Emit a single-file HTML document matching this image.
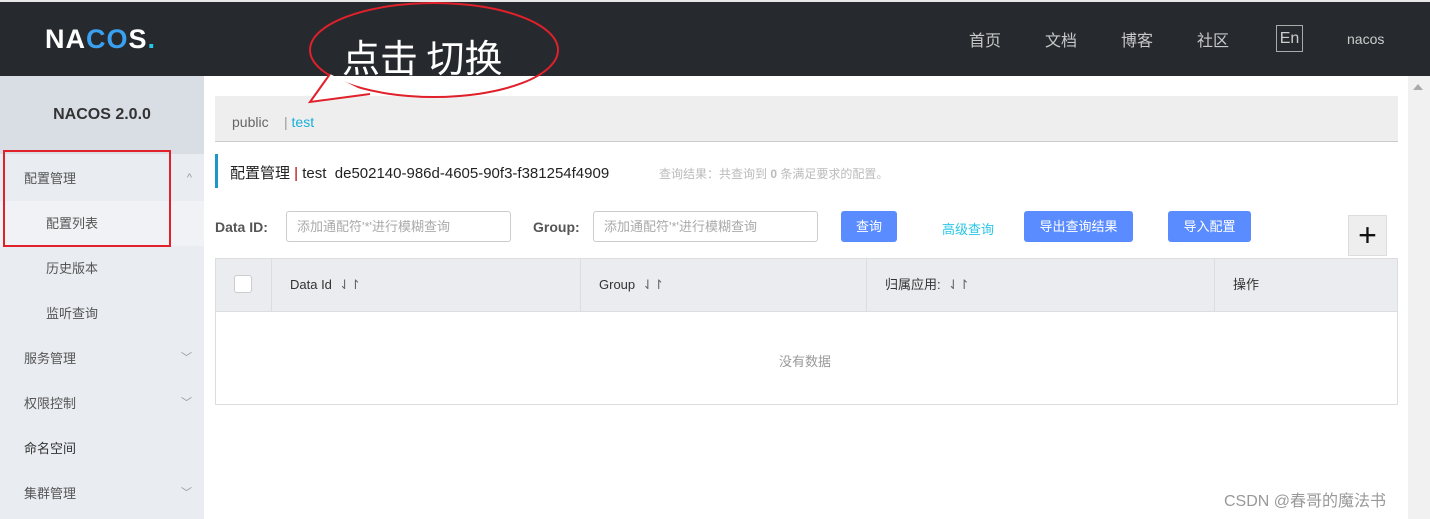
<!DOCTYPE html>
<html><head><meta charset="utf-8"><style>
*{margin:0;padding:0;box-sizing:border-box}
body{width:1430px;height:519px;overflow:hidden;background:#fff;font-family:"Liberation Sans","Noto Sans CJK SC",sans-serif;position:relative;font-size:13px;color:#333}
.a{position:absolute}
.hdr{left:0;top:0;width:1430px;height:76px;background:#262a2f;border-top:2px solid #e8e8e8}
.nav{top:27px;color:#c8c8c8;font-size:16px}
.side{left:0;top:76px;width:204px;height:443px;background:#e9ecf1}
.mi{left:0;width:204px;height:45px;line-height:45px;padding-left:24px;font-size:13px;color:#555}
.sub{padding-left:46px}
.chev{position:absolute;right:12px;top:0;color:#999;font-size:11px}
.btn{background:#5a8cff;color:#fff;border-radius:3px;height:31px;line-height:31px;text-align:center;font-size:13px;top:211px}
.inp{top:211px;height:31px;border:1px solid #ccc;border-radius:3px;color:#aaa;font-size:13px;line-height:29px;padding-left:10px;width:225px}
.th{top:258px;height:54px;line-height:54px;font-size:13px;color:#333;border-right:1px solid #ddd}
</style></head><body>
<div class="a hdr"></div>
<div class="a" style="left:45px;top:24px;color:#fff;font-size:27px;font-weight:bold;letter-spacing:1px;line-height:30px">NA<span style="color:#3aa0f0">CO</span>S<span style="color:#25c9e5">.</span></div>
<div class="a nav" style="left:969px">首页</div>
<div class="a nav" style="left:1045px">文档</div>
<div class="a nav" style="left:1121px">博客</div>
<div class="a nav" style="left:1197px">社区</div>
<div class="a" style="left:1276px;top:25px;width:27px;height:27px;border:1px solid #aaa;color:#ccc;font-size:16px;text-align:center;line-height:25px">En</div>
<div class="a" style="left:1347px;top:31px;color:#ccc;font-size:14px">nacos</div>

<div class="a side"></div>
<div class="a" style="left:0;top:76px;width:204px;height:78px;background:#d9dee5;text-align:center;line-height:78px;font-weight:bold;font-size:16px;color:#333">NACOS 2.0.0</div>
<div class="a mi" style="top:156px">配置管理<span class="chev">^</span></div>
<div class="a mi sub" style="top:201px;background:#f0f2f5">配置列表</div>
<div class="a mi sub" style="top:246px">历史版本</div>
<div class="a mi sub" style="top:291px">监听查询</div>
<div class="a mi" style="top:336px">服务管理<span class="chev">﹀</span></div>
<div class="a mi" style="top:381px">权限控制<span class="chev">﹀</span></div>
<div class="a mi" style="top:426px;color:#333">命名空间</div>
<div class="a mi" style="top:471px">集群管理<span class="chev">﹀</span></div>
<div class="a" style="left:3px;top:150px;width:168px;height:97px;border:2px solid #e0202a"></div>

<div class="a" style="left:1408px;top:76px;width:22px;height:443px;background:#f1f1f1"></div>
<div class="a" style="left:1413px;top:84px;width:0;height:0;border-left:5px solid transparent;border-right:5px solid transparent;border-bottom:6px solid #aaa"></div>

<div class="a" style="left:215px;top:96px;width:1183px;height:46px;background:#eee;border-bottom:1px solid #ccc"></div>
<div class="a" style="left:232px;top:114px;color:#666;font-size:14px">public</div>
<div class="a" style="left:284px;top:114px;color:#1ab0d8;font-size:14px"><span style="color:#999">|</span> test</div>

<div class="a" style="left:215px;top:154px;width:3px;height:34px;background:#1a98c8"></div>
<div class="a" style="left:230px;top:162px;font-size:15px;color:#222">配置管理 <span style="color:#a00">|</span> test&nbsp; de502140-986d-4605-90f3-f381254f4909</div>
<div class="a" style="left:659px;top:165px;font-size:12px;color:#bbb">查询结果：共查询到 <b>0</b> 条满足要求的配置。</div>

<div class="a" style="left:215px;top:219px;font-weight:bold;color:#555;font-size:14px">Data ID:</div>
<div class="a inp" style="left:286px">添加通配符'*'进行模糊查询</div>
<div class="a" style="left:533px;top:219px;font-weight:bold;color:#555;font-size:14px">Group:</div>
<div class="a inp" style="left:593px">添加通配符'*'进行模糊查询</div>
<div class="a btn" style="left:841px;width:56px">查询</div>
<div class="a" style="left:942px;top:219px;color:#2ac5e5">高级查询</div>
<div class="a btn" style="left:1024px;width:109px">导出查询结果</div>
<div class="a btn" style="left:1168px;width:83px">导入配置</div>
<div class="a" style="left:1348px;top:215px;width:39px;height:41px;background:#eee;border:1px solid #ddd;text-align:center;line-height:38px;font-size:32px;color:#111">+</div>

<div class="a" style="left:215px;top:258px;width:1183px;height:147px;border:1px solid #ddd"></div>
<div class="a" style="left:216px;top:259px;width:1181px;height:53px;background:#ebecf0;border-bottom:1px solid #ddd"></div>
<div class="a th" style="left:216px;width:56px"></div>
<div class="a" style="left:234px;top:275px;width:18px;height:18px;border:1px solid #ccc;border-radius:3px;background:#fff"></div>
<div class="a th" style="left:272px;width:309px;padding-left:18px">Data Id&nbsp; <span style="color:#666">⇃↾</span></div>
<div class="a th" style="left:581px;width:286px;padding-left:18px">Group&nbsp; <span style="color:#666">⇃↾</span></div>
<div class="a th" style="left:867px;width:348px;padding-left:18px">归属应用:&nbsp; <span style="color:#666">⇃↾</span></div>
<div class="a th" style="left:1215px;width:182px;padding-left:18px;border-right:none">操作</div>
<div class="a" style="left:779px;top:351px;color:#999">没有数据</div>

<svg class="a" style="left:300px;top:0" width="270" height="110"><ellipse cx="134" cy="50" rx="124" ry="47" fill="none" stroke="#e0202a" stroke-width="2"/><path d="M30 74 L10 102 L70 94" fill="#fff" stroke="#e0202a" stroke-width="2"/></svg>
<div class="a" style="left:342px;top:32px;font-size:38px;color:#fff;font-family:'Noto Sans CJK SC',sans-serif;line-height:48px">点击 切换</div>
<div class="a" style="left:1224px;top:487px;font-size:16px;color:#999">CSDN @春哥的魔法书</div>
</body></html>
